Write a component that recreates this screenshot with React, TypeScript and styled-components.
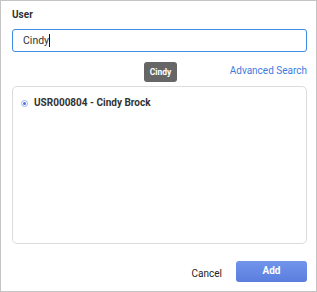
import styled, { createGlobalStyle } from 'styled-components';

const GlobalStyle = createGlobalStyle`
  html, body {
    margin: 0;
    padding: 0;
    background: #ffffff;
  }
  body {
    font-family: Roboto, "Liberation Sans", Arial, sans-serif;
  }
`;

const Dialog = styled.div`
  box-sizing: border-box;
  width: 317px;
  height: 292px;
  border: 1px solid #c4c4c4;
  background: #fff;
  padding: 7px 9px 0 11px;
  display: flex;
  flex-direction: column;
`;

const Label = styled.div`
  font-size: 10px;
  line-height: 13px;
  font-weight: 700;
  color: #333;
  height: 13px;
`;

const InputWrap = styled.div`
  position: relative;
  margin-top: 8px;
`;

const Input = styled.div`
  box-sizing: border-box;
  height: 23px;
  border: 1px solid #3a8ee6;
  border-radius: 3px;
  padding: 0 10px;
  display: flex;
  align-items: center;
  font-size: 10.5px;
  color: #333;
`;

const Caret = styled.span`
  display: inline-block;
  width: 1px;
  height: 13px;
  background: #111;
`;

const Tooltip = styled.div`
  position: absolute;
  left: 132px;
  top: 33px;
  width: 33px;
  height: 20px;
  border-radius: 3px;
  background: #666;
  color: #fff;
  font-size: 8.5px;
  font-weight: 700;
  display: flex;
  align-items: center;
  justify-content: center;
`;

const LinkRow = styled.div`
  display: flex;
  justify-content: flex-end;
  margin-top: 12px;
  height: 13px;
`;

const Link = styled.a`
  font-size: 10px;
  line-height: 13px;
  color: #3d7ae0;
  text-decoration: none;
  cursor: pointer;
`;

const ResultList = styled.div`
  box-sizing: border-box;
  margin-top: 9px;
  height: 158px;
  border: 1px solid #dcdcdc;
  border-radius: 5px;
  padding: 9px 8px;
`;

const ResultItem = styled.div`
  display: flex;
  align-items: center;
  gap: 6px;
  font-size: 10px;
  line-height: 14px;
  font-weight: 700;
  color: #333;
`;

const Radio = styled.span`
  box-sizing: border-box;
  width: 7px;
  height: 7px;
  border-radius: 50%;
  border: 1px solid #9ab2ee;
  display: flex;
  align-items: center;
  justify-content: center;
  &::after {
    content: '';
    width: 3px;
    height: 3px;
    border-radius: 50%;
    background: #4d70e2;
  }
`;

const Footer = styled.div`
  display: flex;
  justify-content: flex-end;
  align-items: center;
  gap: 14px;
  margin-top: 17px;
`;

const TextButton = styled.button`
  border: none;
  background: none;
  padding: 0;
  margin-top: 3px;
  font-family: inherit;
  font-size: 10px;
  color: #222;
  cursor: pointer;
`;

const PrimaryButton = styled.button`
  box-sizing: border-box;
  width: 71px;
  height: 21px;
  border: none;
  border-radius: 3px;
  background: linear-gradient(#7195ea, #5b7edf);
  color: #fff;
  font-family: inherit;
  font-size: 10px;
  font-weight: 700;
  padding: 0 0 2px;
  cursor: pointer;
`;

export default function App() {
  return (
    <>
      <GlobalStyle />
      <Dialog>
        <Label>User</Label>
        <InputWrap>
          <Input>
            Cindy<Caret />
          </Input>
          <Tooltip>Cindy</Tooltip>
        </InputWrap>
        <LinkRow>
          <Link>Advanced Search</Link>
        </LinkRow>
        <ResultList>
          <ResultItem>
            <Radio />
            USR000804 - Cindy Brock
          </ResultItem>
        </ResultList>
        <Footer>
          <TextButton>Cancel</TextButton>
          <PrimaryButton>Add</PrimaryButton>
        </Footer>
      </Dialog>
    </>
  );
}
